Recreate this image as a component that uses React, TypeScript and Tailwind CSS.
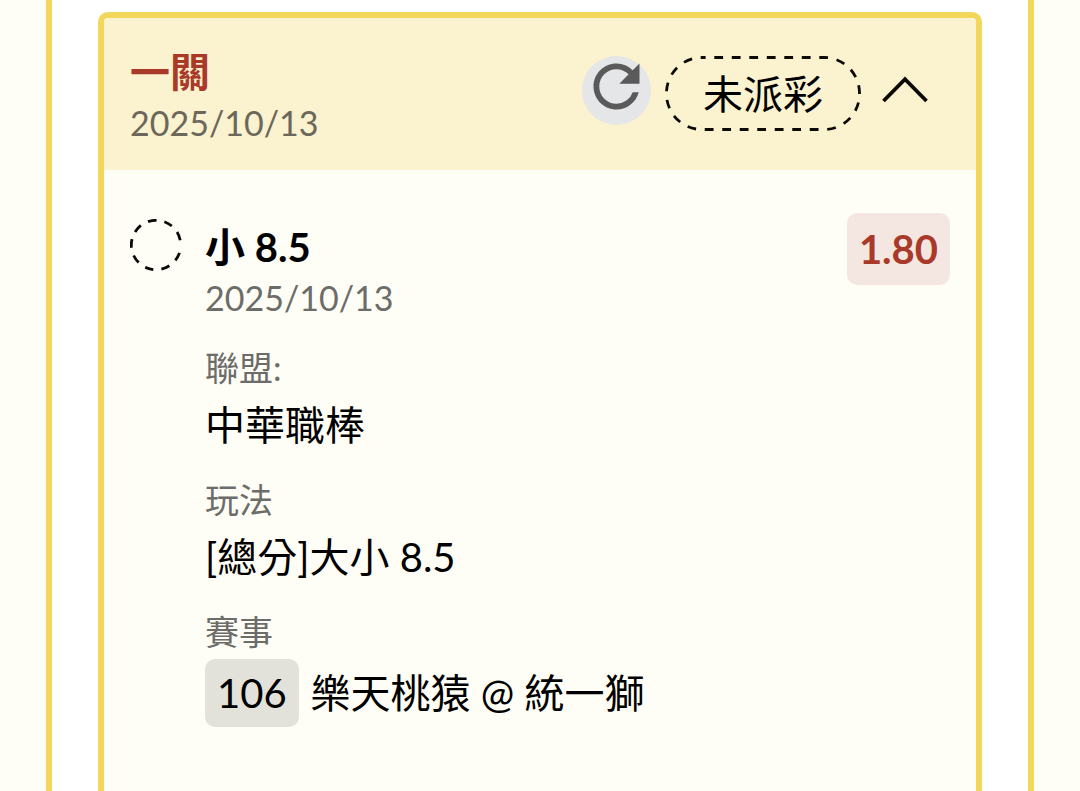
type Detail = { label: string; value: string; code?: string };

const details: Detail[] = [
  { label: "聯盟:", value: "中華職棒" },
  { label: "玩法", value: "[總分]大小 8.5" },
  { label: "賽事", value: "樂天桃猿 @ 統一獅", code: "106" },
];

function RefreshIcon() {
  return (
    <svg viewBox="0 0 24 24" className="size-[69px] shrink-0" fill="#5a5a5a" aria-hidden="true">
      <path d="M17.65 6.35A7.958 7.958 0 0 0 12 4c-4.42 0-7.99 3.58-7.99 8s3.57 8 7.99 8c3.73 0 6.84-2.55 7.73-6h-2.08A5.99 5.99 0 0 1 12 18c-3.31 0-6-2.69-6-6s2.69-6 6-6c1.66 0 3.14.69 4.22 1.78L13 11h7V4l-2.35 2.35z" />
    </svg>
  );
}

function ChevronUpIcon() {
  return (
    <svg viewBox="0 0 46 28" className="h-7 w-[46px]" fill="none" aria-hidden="true">
      <path d="M1.5 25 L23 3.2 L44.5 25" stroke="#0c0a04" strokeWidth="3.8" />
    </svg>
  );
}

function StatusPill({ text }: { text: string }) {
  return (
    <span className="relative flex h-[75px] w-[196px] items-center justify-center text-[40px]">
      <svg viewBox="0 0 196 75" className="absolute inset-0 size-full" fill="none" aria-hidden="true">
        <rect
          x="1.5"
          y="1.5"
          width="193"
          height="72"
          rx="35.5"
          stroke="#0c0a04"
          strokeWidth="2.8"
          strokeDasharray="8.8 8.7"
          strokeDashoffset="-12.3"
        />
      </svg>
      {text}
    </span>
  );
}

function PendingMark() {
  return (
    <svg viewBox="0 0 52 52" className="mt-[6px] size-[52px] shrink-0" fill="none" aria-hidden="true">
      <circle
        cx="26"
        cy="26"
        r="24.7"
        stroke="#0a0a0a"
        strokeWidth="2.8"
        transform="rotate(18.5 26 26)"
        strokeDasharray="8.6 8 8.6 8 8.6 8 8.6 8 8.6 8 8.6 8 8.6 8 8.6 8 8.6 20"
      />
    </svg>
  );
}

export default function App() {
  return (
    <div className="flex min-h-screen flex-col bg-[#fefef6] px-[46px] font-['Lato','Noto_Sans_CJK_TC',sans-serif] text-black">
      <main className="flex flex-1 flex-col border-x-[6px] border-[#f3d75a] bg-white px-[46px] pt-3">
        <article className="flex flex-1 flex-col rounded-t-[10px] border-6 border-b-0 border-[#f3d75a] bg-[#fefef6]">
          <header className="flex items-start justify-between rounded-t bg-[#fbf2cf] px-[26px] pt-6 pb-[26px]">
            <div>
              <h1 className="text-[40px] leading-[60px] font-bold text-[#a93a2a]">一關</h1>
              <p className="text-[34px] leading-[42px] text-[#6b675a]">2025/10/13</p>
            </div>
            <div className="flex items-start pt-[14px] pr-[22px]">
              <button
                type="button"
                aria-label="重新整理"
                className="mr-[14px] flex size-[69px] items-center justify-center rounded-full bg-[#e4e6e8] pb-2"
              >
                <RefreshIcon />
              </button>
              <StatusPill text="未派彩" />
              <button type="button" aria-label="收合" className="ml-[21px] pt-5">
                <ChevronUpIcon />
              </button>
            </div>
          </header>

          <section className="flex items-start px-[26px] pt-[43px] pb-12">
            <PendingMark />
            <div className="ml-[23px] flex-1 pt-1">
              <h2 className="text-[40px] leading-[60px] font-bold">小 8.5</h2>
              <p className="text-[34px] leading-[42px] text-[#6c6c69]">2025/10/13</p>
              <dl className="mt-6 flex flex-col gap-5">
                {details.map(({ label, value, code }) => (
                  <div key={label}>
                    <dt className="text-[34px] leading-[50px] text-[#6c6c69]">{label}</dt>
                    <dd className="flex items-center pt-[2px] text-[40px] leading-[60px]">
                      {code && (
                        <span className="mr-3 rounded-[10px] bg-[#e2e2db] px-3 leading-[68px]">{code}</span>
                      )}
                      <span>{value}</span>
                    </dd>
                  </div>
                ))}
              </dl>
            </div>
            <strong className="rounded-[10px] bg-[#f4e7e1] px-3 text-[40px] leading-[72px] font-bold text-[#a93a2a]">
              1.80
            </strong>
          </section>
        </article>
      </main>
    </div>
  );
}
